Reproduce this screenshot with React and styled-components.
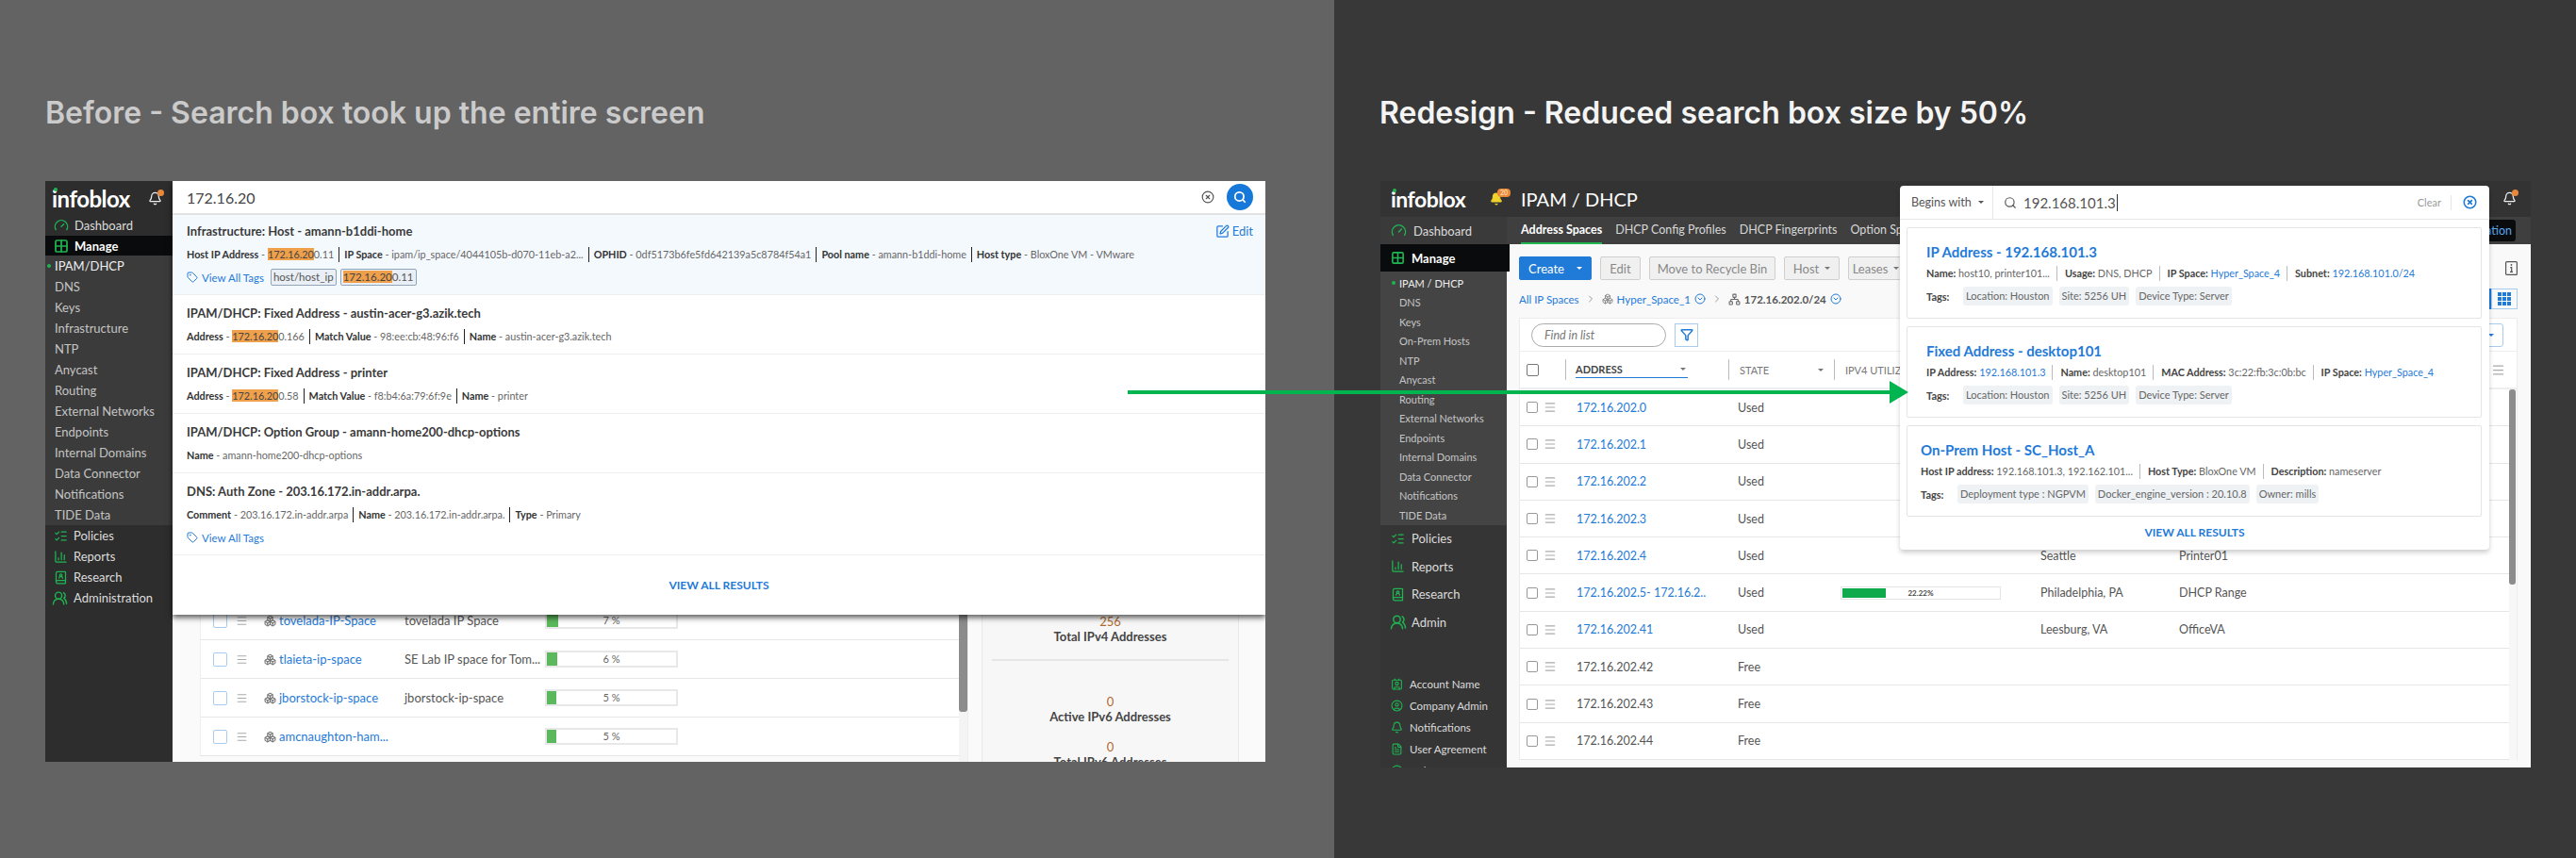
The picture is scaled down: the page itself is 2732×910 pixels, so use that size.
import styled, { createGlobalStyle } from "styled-components";
import {
  Bell,
  BookUser,
  Boxes,
  ChartColumn,
  ChevronRight,
  CircleChevronDown,
  CircleHelp,
  CircleUser,
  CircleX,
  Contact,
  FileText,
  Funnel,
  Gauge,
  Grid2x2,
  ListChecks,
  Menu,
  Network,
  Search,
  SquarePen,
  Tag,
  UsersRound,
} from "lucide-react";

const GREEN = "#1fb552";
const BLUE = "#1f7ad8";

const GlobalStyle = createGlobalStyle`
html, body {
  margin: 0;
  padding: 0;
  background: #383838;
}
* {
  box-sizing: border-box;
}
`;

const Page = styled.div`
  position: relative;
  display: grid;
  grid-template-columns: 1415px 1fr;
  width: 2732px;
  height: 910px;
  overflow: hidden;
  font-family: Lato, "Liberation Sans", sans-serif;
  color: #444;
`;

const Half = styled.section`
  padding: 100px 0 0 48px;
  background: ${(p) => p.$bg};
`;

const Heading = styled.h1`
  margin: 0 0 52px;
  height: 40px;
  font-family: Inter, "Liberation Sans", sans-serif;
  font-size: 32px;
  font-weight: 600;
  line-height: 40px;
  white-space: nowrap;
  color: ${(p) => p.$color};
`;

const AppFrame = styled.div`
  position: relative;
  display: flex;
  width: ${(p) => p.$width}px;
  height: ${(p) => p.$height}px;
  margin-left: ${(p) => p.$offset || 0}px;
  overflow: hidden;
`;

const Sidebar = styled.nav`
  flex: 0 0 ${(p) => p.$width}px;
  display: flex;
  flex-direction: column;
  background: ${(p) => p.$bg};
  color: #eee;
`;

const LogoBar = styled.div`
  flex: 0 0 ${(p) => p.$height}px;
  display: flex;
  align-items: center;
  justify-content: space-between;
  padding: 0 ${(p) => p.$right}px 0 ${(p) => p.$left}px;
  background: ${(p) => p.$bg || "transparent"};
`;

const Logo = styled.span`
  position: relative;
  font-family: Lato, sans-serif;
  font-size: ${(p) => p.$size}px;
  font-weight: 700;
  letter-spacing: -0.5px;
  color: #fff;
  &::before {
    content: "";
    position: absolute;
    left: 2px;
    top: 3px;
    width: 4px;
    height: 4px;
    border-radius: 50%;
    background: ${GREEN};
  }
`;

const BellWrap = styled.span`
  position: relative;
  display: inline-flex;
  color: ${(p) => p.$color};
`;

const BellDot = styled.span`
  position: absolute;
  top: -2px;
  right: -2px;
  width: 7px;
  height: 7px;
  border-radius: 50%;
  background: #e8883a;
`;

const BellBadge = styled.span`
  position: absolute;
  top: -4px;
  left: 8px;
  padding: 0 3px;
  border-radius: 4px;
  background: #e8883a;
  color: #ffd9a8;
  font-size: 7px;
  font-weight: 700;
  line-height: 9px;
`;

const NavItem = styled.div`
  flex: 0 0 ${(p) => p.$height}px;
  display: flex;
  align-items: center;
  gap: ${(p) => p.$gap}px;
  padding-left: ${(p) => p.$pad}px;
  font-size: ${(p) => p.$size}px;
  color: ${(p) => p.$color || "#dcdcdc"};
  background: ${(p) => p.$bg || "transparent"};
  white-space: nowrap;
  svg {
    flex: none;
    color: ${GREEN};
  }
`;

const ManageItem = styled(NavItem)`
  position: relative;
  z-index: 2;
  font-weight: 700;
  color: #fff;
  background: #0a0b0c;
  margin-right: ${(p) => p.$over || 0}px;
`;

const SubMenu = styled.div`
  display: flex;
  flex-direction: column;
  padding-top: ${(p) => p.$top || 0}px;
  background: ${(p) => p.$bg};
`;

const SubItem = styled.div`
  position: relative;
  flex: 0 0 ${(p) => p.$height}px;
  display: flex;
  align-items: center;
  padding-left: ${(p) => p.$pad}px;
  font-size: ${(p) => p.$size}px;
  color: ${(p) => (p.$on ? "#eee" : "#c4c4c4")};
  white-space: nowrap;
  &::before {
    content: "";
    display: ${(p) => (p.$on ? "block" : "none")};
    position: absolute;
    left: ${(p) => p.$pad - 8}px;
    top: 50%;
    width: 4px;
    height: 4px;
    margin-top: -2px;
    border-radius: 50%;
    background: ${GREEN};
  }
`;

const BottomNav = styled.div`
  display: flex;
  flex-direction: column;
  margin-top: 39px;
`;

/* left screen */

const LeftMain = styled.main`
  position: relative;
  flex: 1;
  display: flex;
  align-items: flex-start;
  padding: 446px 0 0 29px;
  background: #fafafa;
`;

const SearchPanel = styled.div`
  position: absolute;
  z-index: 3;
  top: 0;
  left: 0;
  right: 0;
  height: 460px;
  display: flex;
  flex-direction: column;
  background: #fff;
  box-shadow: 0 3px 6px rgba(0, 0, 0, 0.65);
`;

const BigSearch = styled.div`
  flex: 0 0 36px;
  display: flex;
  align-items: center;
  padding: 0 13px 0 15px;
  border-bottom: 2px solid #e2e2e2;
  font-size: 16px;
  color: #444;
`;

const BigSearchText = styled.span`
  flex: 1;
`;

const BigSearchButton = styled.span`
  display: flex;
  align-items: center;
  justify-content: center;
  width: 28px;
  height: 28px;
  margin-left: 13px;
  border-radius: 50%;
  background: #1678d8;
  color: #fff;
`;

const Result = styled.div`
  padding: ${(p) => (p.$active ? 8 : 10)}px 13px 10px 15px;
  border-bottom: 1px solid #efefef;
  background: ${(p) => (p.$active ? "#f4f9fe" : "#fff")};
`;

const ResultHead = styled.div`
  display: flex;
  align-items: center;
  justify-content: space-between;
`;

const ResultTitle = styled.div`
  font-size: 13px;
  font-weight: 700;
  line-height: 18px;
  color: #3a3a3a;
`;

const EditLink = styled.a`
  display: inline-flex;
  align-items: center;
  gap: 3px;
  font-size: 13px;
  color: ${BLUE};
`;

const ResultMeta = styled.div`
  display: flex;
  align-items: center;
  height: 16px;
  margin-top: 8px;
  font-size: 10.8px;
  color: #666;
  white-space: nowrap;
`;

const MetaPart = styled.span`
  display: inline-block;
  line-height: 16px;
  padding-right: 5px;
  margin-right: 5px;
  border-right: 1px solid #222;
  &:last-child {
    border-right: 0;
  }
  b {
    color: #333;
  }
`;

const Hit = styled.mark`
  background: #f0a04b;
  color: #444;
`;

const TagRow = styled.div`
  display: flex;
  align-items: center;
  gap: 4px;
  height: 16px;
  margin-top: 8px;
  font-size: 11.5px;
`;

const TagLink = styled.a`
  display: inline-flex;
  align-items: center;
  gap: 4px;
  margin-right: 3px;
  color: ${BLUE};
`;

const HostChip = styled.span`
  padding: 1px 2px;
  border: 1px solid #8fa5bb;
  border-radius: 2px;
  background: #e9eff5;
  color: #555;
  font-size: 11.5px;
  line-height: 14px;
`;

const PanelFoot = styled.a`
  flex: 1;
  display: flex;
  align-items: center;
  justify-content: center;
  padding-bottom: 1px;
  font-size: 12px;
  font-weight: 700;
  color: ${BLUE};
`;

const SpaceTable = styled.div`
  flex: 0 0 805px;
  background: #fff;
  border-left: 1px solid #eee;
`;

const SpaceRow = styled.div`
  display: grid;
  grid-template-columns: 24px 30px 16px 133px 149px 141px;
  align-items: center;
  height: 41px;
  padding-left: 13px;
  border-bottom: 1px solid #e6e6e6;
  font-size: 13px;
  color: #555;
`;

const CheckBox = styled.span`
  display: block;
  width: ${(p) => p.$size}px;
  height: ${(p) => p.$size}px;
  border: 1px solid ${(p) => p.$color};
  border-radius: 2px;
  background: #fff;
`;

const RowLink = styled.a`
  color: ${BLUE};
  white-space: nowrap;
`;

const PercentBar = styled.div`
  position: relative;
  height: 18px;
  border: 2px solid #e8e8e8;
  font-size: 11px;
  line-height: 14px;
  text-align: center;
  color: #666;
`;

const PercentFill = styled.span`
  position: absolute;
  left: 0;
  top: 0;
  bottom: 0;
  background: #5cb85c;
`;

const ScrollTrack = styled.div`
  flex: 0 0 10px;
  align-self: stretch;
  background: #f4f4f4;
  border-right: 1px solid #eee;
`;

const ScrollThumb = styled.div`
  height: ${(p) => p.$height}px;
  width: ${(p) => p.$width}px;
  border-radius: 3px;
  background: #8c8c8c;
`;

const StatsPanel = styled.aside`
  flex: 0 0 273px;
  align-self: stretch;
  margin-left: 14px;
  padding-top: 14px;
  background: #f7f7f7;
  border-left: 1px solid #e8e8e8;
  border-right: 1px solid #e8e8e8;
  text-align: center;
  font-size: 13px;
  font-weight: 700;
  color: #444;
`;

const StatBlock = styled.div`
  margin-top: ${(p) => p.$top}px;
  padding-bottom: ${(p) => p.$bottom || 0}px;
  margin-left: 10px;
  margin-right: 10px;
  border-bottom: ${(p) => (p.$line ? "2px solid #e6e6e6" : "0")};
`;

const StatValue = styled.div`
  font-weight: 400;
  line-height: 15px;
  color: #b06a30;
`;

const StatLabel = styled.div`
  line-height: 16px;
`;

/* right screen */

const RightMain = styled.main`
  flex: 1;
  display: flex;
  flex-direction: column;
  min-width: 0;
  background: #f9f9f9;
`;

const TitleBar = styled.header`
  flex: 0 0 38px;
  display: flex;
  align-items: center;
  padding-left: 15px;
  background: #333;
  font-size: 20px;
  color: #fff;
`;

const TabBar = styled.div`
  flex: 0 0 29px;
  display: flex;
  gap: 14px;
  padding-left: 15px;
  background: #3f3f3f;
`;

const TabLink = styled.a`
  display: flex;
  align-items: center;
  font-size: 12.5px;
  font-weight: ${(p) => (p.$on ? 700 : 400)};
  color: ${(p) => (p.$on ? "#fff" : "#d8d8d8")};
  border-bottom: 2px solid ${(p) => (p.$on ? GREEN : "transparent")};
  white-space: nowrap;
`;

const RightTab = styled.a`
  align-self: center;
  height: 23px;
  margin: 0 16px 0 auto;
  padding: 0 4px 0 40px;
  border-radius: 3px;
  background: #0a0b0c;
  font-size: 12.5px;
  line-height: 23px;
  color: #58a6f0;
`;

const Content = styled.div`
  flex: 1;
  min-height: 0;
  padding: 13px 14px 0 13px;
`;

const Toolbar = styled.div`
  display: flex;
  align-items: center;
  gap: 9px;
  height: 25px;
`;

const ToolButton = styled.button`
  display: inline-flex;
  align-items: center;
  justify-content: center;
  gap: ${(p) => p.$gap || 0}px;
  height: 25px;
  width: ${(p) => p.$width}px;
  border: 1px solid ${(p) => (p.$primary ? BLUE : "#cfcfcf")};
  border-radius: 2px;
  background: ${(p) => (p.$primary ? BLUE : "#f0f0f0")};
  color: ${(p) => (p.$primary ? "#fff" : "#888")};
  font-family: inherit;
  font-size: 13px;
`;

const Caret = styled.span`
  display: inline-block;
  width: 0;
  height: 0;
  border-left: 3px solid transparent;
  border-right: 3px solid transparent;
  border-top: 3px solid ${(p) => p.$color || "#777"};
`;

const ToolInfo = styled.span`
  display: inline-flex;
  margin-left: auto;
  margin-right: 0;
  color: #555;
`;

const Crumbs = styled.div`
  display: flex;
  align-items: center;
  gap: 4px;
  height: 20px;
  margin-top: 10px;
  font-size: 11.5px;
  color: ${BLUE};
  white-space: nowrap;
`;

const CrumbSep = styled.span`
  display: inline-flex;
  margin: 0 2px;
  color: #999;
`;

const CrumbBold = styled.b`
  color: #555;
`;

const ViewToggle = styled.span`
  display: inline-flex;
  align-items: center;
  justify-content: center;
  width: 28px;
  height: 22px;
  margin-left: auto;
  border: 1px solid #a9cbee;
  box-shadow: -3px 0 0 ${BLUE};
  color: ${BLUE};
`;

const TableCard = styled.div`
  margin-top: 10px;
  display: flex;
  flex-direction: column;
  background: #fff;
  border: 1px solid #ececec;
  border-bottom: 0;
`;

const FindRow = styled.div`
  flex: 0 0 35px;
  display: flex;
  align-items: center;
  padding: 0 14px 0 12px;
  border-bottom: 1px solid #eee;
`;

const FindInput = styled.div`
  width: 143px;
  height: 25px;
  padding-left: 13px;
  border: 1px solid #aaa;
  border-radius: 13px;
  font-size: 12.5px;
  font-style: italic;
  line-height: 23px;
  color: #777;
`;

const FilterButton = styled.span`
  display: inline-flex;
  align-items: center;
  justify-content: center;
  width: 25px;
  height: 25px;
  margin-left: 9px;
  border: 1px solid #a9cbee;
  color: ${BLUE};
`;

const ViewSelect = styled.span`
  display: inline-flex;
  align-items: center;
  justify-content: flex-end;
  width: 40px;
  height: 25px;
  margin-left: auto;
  padding-right: 9px;
  border: 1px solid #a9cbee;
  border-radius: 0 3px 3px 0;
`;

const HeadRow = styled.div`
  flex: 0 0 40px;
  display: flex;
  align-items: center;
  padding: 0 12px 0 7px;
  border-bottom: 2px solid #eee;
  font-size: 11px;
  color: #777;
  white-space: nowrap;
`;

const HeadCheck = styled.span`
  flex: 0 0 41px;
`;

const HeadCell = styled.span`
  flex: 0 0 ${(p) => p.$width}px;
  display: flex;
  align-items: center;
  height: 22px;
  border-left: 1px solid #bbb;
  padding-left: ${(p) => p.$pad}px;
`;

const HeadSort = styled.span`
  display: flex;
  align-items: center;
  justify-content: space-between;
  width: 119px;
  padding: 0 2px 0 0;
  border-bottom: 1px solid ${BLUE};
  line-height: 17px;
  font-weight: 700;
  color: #444;
`;

const HeadPlain = styled.span`
  display: flex;
  align-items: center;
  justify-content: space-between;
  width: 89px;
`;

const HeadMenu = styled.span`
  display: inline-flex;
  margin-left: auto;
  color: #aaa;
`;

const TableBody = styled.div`
  display: flex;
`;

const RowList = styled.div`
  flex: 1;
  min-width: 0;
`;

const IpRow = styled.div`
  display: grid;
  grid-template-columns: 53px 171px 109px 212px 147px 1fr;
  align-items: center;
  height: 39.3px;
  padding-left: 7px;
  border-bottom: 1px solid #e6e6e6;
  font-size: 12.5px;
  color: #555;
  white-space: nowrap;
`;

const RowHandle = styled.span`
  display: flex;
  align-items: center;
  gap: 6px;
`;

const HandleIcon = styled.span`
  display: inline-flex;
  color: #aaa;
`;

const UtilBar = styled.div`
  position: relative;
  width: 170px;
  height: 14px;
  border: 1px solid #e4e4e4;
  font-size: 8px;
  font-weight: 700;
  line-height: 12px;
  text-align: center;
  color: #444;
`;

const UtilFill = styled.span`
  position: absolute;
  left: 1px;
  top: 1px;
  bottom: 1px;
  background: #0eaa4b;
`;

const RightScroll = styled.div`
  flex: 0 0 8px;
  background: #f7f7f7;
`;

const SearchPopover = styled.div`
  position: absolute;
  z-index: 3;
  top: 5px;
  left: 551px;
  width: 625px;
  height: 386px;
  display: flex;
  flex-direction: column;
  border-radius: 4px;
  background: #fff;
  box-shadow: 0 3px 5px rgba(0, 0, 0, 0.2);
`;

const PopoverBar = styled.div`
  flex: 0 0 36px;
  display: flex;
  align-items: center;
  border-bottom: 1px solid #e6e6e6;
`;

const MatchSelect = styled.div`
  flex: 0 0 99px;
  align-self: stretch;
  display: flex;
  align-items: center;
  gap: 7px;
  padding-left: 12px;
  border-right: 1px solid #e6e6e6;
  font-size: 12.5px;
  color: #555;
`;

const PopoverInput = styled.div`
  flex: 1;
  display: flex;
  align-items: center;
  gap: 7px;
  padding-left: 11px;
  font-size: 15px;
  color: #555;
`;

const TextCaret = styled.span`
  display: inline-block;
  width: 1px;
  height: 18px;
  margin-left: 1px;
  vertical-align: -3px;
  background: #333;
`;

const ClearLink = styled.a`
  padding-right: 10px;
  border-right: 1px solid #e6e6e6;
  font-size: 11px;
  line-height: 16px;
  color: #999;
`;

const CloseIcon = styled.span`
  display: inline-flex;
  margin: 0 13px 0 12px;
  color: ${BLUE};
`;

const CardList = styled.div`
  display: flex;
  flex-direction: column;
  gap: 8px;
  padding: 8px 8px 0 7px;
`;

const HitCard = styled.article`
  height: 97px;
  padding: 15px 0 0 ${(p) => p.$pad}px;
  border: 1px solid #e4e4e4;
  border-radius: 2px;
`;

const HitTitle = styled.h3`
  margin: 0;
  font-size: 15px;
  font-weight: 700;
  line-height: 20px;
  color: ${BLUE};
`;

const HitMeta = styled.div`
  display: flex;
  align-items: center;
  height: 16px;
  margin-top: 5px;
  font-size: 10.8px;
  color: #666;
  white-space: nowrap;
`;

const HitPart = styled.span`
  padding-right: 7px;
  margin-right: 8px;
  border-right: 1px solid #bbb;
  line-height: 16px;
  &:last-child {
    border-right: 0;
  }
  b {
    color: #444;
  }
  a {
    color: ${BLUE};
  }
`;

const HitTags = styled.div`
  display: flex;
  align-items: center;
  gap: 7px;
  margin-top: 6px;
  font-size: 11px;
  color: #666;
  white-space: nowrap;
`;

const HitTagLabel = styled.b`
  flex: 0 0 32px;
  color: #444;
`;

const HitChip = styled.span`
  padding: 0 3px;
  border-radius: 3px;
  background: #eef2f5;
  line-height: 20px;
`;

const PopoverFoot = styled.a`
  flex: 1;
  display: flex;
  align-items: center;
  justify-content: center;
  padding-bottom: 3px;
  font-size: 12px;
  font-weight: 700;
  color: ${BLUE};
`;

const TopBell = styled.span`
  position: absolute;
  z-index: 2;
  top: 10px;
  right: 15px;
`;

const FlowArrow = styled.svg`
  position: absolute;
  z-index: 5;
  left: 1196px;
  top: 404px;
`;

const leftNav = ["DNS", "Keys", "Infrastructure", "NTP", "Anycast", "Routing", "External Networks", "Endpoints", "Internal Domains", "Data Connector", "Notifications", "TIDE Data"];
const rightNav = ["DNS", "Keys", "On-Prem Hosts", "NTP", "Anycast", "Routing", "External Networks", "Endpoints", "Internal Domains", "Data Connector", "Notifications", "TIDE Data"];

const spaces = [
  { name: "tovelada-IP-Space", desc: "tovelada IP Space", pct: 7 },
  { name: "tlaieta-ip-space", desc: "SE Lab IP space for Tom...", pct: 6 },
  { name: "jborstock-ip-space", desc: "jborstock-ip-space", pct: 5 },
  { name: "amcnaughton-ham...", desc: "", pct: 5 },
];

const addresses = [
  { ip: "172.16.202.0", state: "Used", link: true },
  { ip: "172.16.202.1", state: "Used", link: true },
  { ip: "172.16.202.2", state: "Used", link: true },
  { ip: "172.16.202.3", state: "Used", link: true },
  { ip: "172.16.202.4", state: "Used", link: true, place: "Seattle", name: "Printer01" },
  { ip: "172.16.202.5- 172.16.2..", state: "Used", link: true, util: 22.22, place: "Philadelphia, PA", name: "DHCP Range" },
  { ip: "172.16.202.41", state: "Used", link: true, place: "Leesburg, VA", name: "OfficeVA" },
  { ip: "172.16.202.42", state: "Free" },
  { ip: "172.16.202.43", state: "Free" },
  { ip: "172.16.202.44", state: "Free" },
];

const Part = ({ label, children }) => (
  <MetaPart>
    <b>{label}</b> - {children}
  </MetaPart>
);

const ViewAllTags = () => (
  <TagLink>
    <Tag size={12} />
    View All Tags
  </TagLink>
);

// square with an i, the table info toggle
const InfoSquare = () => (
  <svg width="13" height="15" viewBox="0 0 13 15" fill="none" stroke="currentColor" strokeWidth="1.2">
    <rect x="0.6" y="0.6" width="11.8" height="13.8" rx="1" />
    <circle cx="6.5" cy="4" r="0.9" fill="currentColor" stroke="none" />
    <path d="M5.2 6.6h1.5v4.6M5 11.4h3" />
  </svg>
);

// nine filled squares, the grid view toggle
const NineSquares = () => (
  <svg width="14" height="14" viewBox="0 0 14 14" fill="currentColor">
    {[0, 5, 10].flatMap((y) =>
      [0, 5, 10].map((x) => <rect key={`${x}-${y}`} x={x} y={y} width="4" height="4" />)
    )}
  </svg>
);

const BeforeScreen = () => (
  <AppFrame $width={1294} $height={616}>
    <Sidebar $width={135} $bg="#2d2d2d">
      <LogoBar $height={36} $left={7} $right={11}>
        <Logo $size={24}>infoblox</Logo>
        <BellWrap $color="#eee">
          <Bell size={15} />
          <BellDot />
        </BellWrap>
      </LogoBar>
      <NavItem $height={22} $gap={6} $pad={9} $size={13}>
        <Gauge size={16} />
        Dashboard
      </NavItem>
      <ManageItem $height={21} $gap={6} $pad={9} $size={13}>
        <Grid2x2 size={16} strokeWidth={2.6} />
        Manage
      </ManageItem>
      <SubMenu $bg="#3b3b3b">
        <SubItem $height={22} $pad={10} $size={13} $on>
          IPAM/DHCP
        </SubItem>
        {leftNav.map((item) => (
          <SubItem key={item} $height={22} $pad={10} $size={13}>
            {item}
          </SubItem>
        ))}
      </SubMenu>
      <NavItem $height={22} $gap={6} $pad={9} $size={13}>
        <ListChecks size={15} />
        Policies
      </NavItem>
      <NavItem $height={22} $gap={6} $pad={9} $size={13}>
        <ChartColumn size={15} />
        Reports
      </NavItem>
      <NavItem $height={22} $gap={6} $pad={9} $size={13}>
        <BookUser size={15} />
        Research
      </NavItem>
      <NavItem $height={22} $gap={6} $pad={7} $size={13}>
        <UsersRound size={17} />
        Administration
      </NavItem>
    </Sidebar>
    <LeftMain>
      <SearchPanel>
        <BigSearch>
          <BigSearchText>172.16.20</BigSearchText>
          <CircleX size={14} color="#555" />
          <BigSearchButton>
            <Search size={14} strokeWidth={3} />
          </BigSearchButton>
        </BigSearch>
        <Result $active>
          <ResultHead>
            <ResultTitle>Infrastructure: Host - amann-b1ddi-home</ResultTitle>
            <EditLink>
              <SquarePen size={15} />
              Edit
            </EditLink>
          </ResultHead>
          <ResultMeta>
            <Part label="Host IP Address">
              <Hit>172.16.20</Hit>0.11
            </Part>
            <Part label="IP Space">ipam/ip_space/4044105b-d070-11eb-a2...</Part>
            <Part label="OPHID">0df5173b6fe5fd642139a5c8784f54a1</Part>
            <Part label="Pool name">amann-b1ddi-home</Part>
            <Part label="Host type">BloxOne VM - VMware</Part>
          </ResultMeta>
          <TagRow>
            <ViewAllTags />
            <HostChip>host/host_ip</HostChip>
            <HostChip>
              <Hit>172.16.20</Hit>0.11
            </HostChip>
          </TagRow>
        </Result>
        <Result>
          <ResultTitle>IPAM/DHCP: Fixed Address - austin-acer-g3.azik.tech</ResultTitle>
          <ResultMeta>
            <Part label="Address">
              <Hit>172.16.20</Hit>0.166
            </Part>
            <Part label="Match Value">98:ee:cb:48:96:f6</Part>
            <Part label="Name">austin-acer-g3.azik.tech</Part>
          </ResultMeta>
        </Result>
        <Result>
          <ResultTitle>IPAM/DHCP: Fixed Address - printer</ResultTitle>
          <ResultMeta>
            <Part label="Address">
              <Hit>172.16.20</Hit>0.58
            </Part>
            <Part label="Match Value">f8:b4:6a:79:6f:9e</Part>
            <Part label="Name">printer</Part>
          </ResultMeta>
        </Result>
        <Result>
          <ResultTitle>IPAM/DHCP: Option Group - amann-home200-dhcp-options</ResultTitle>
          <ResultMeta>
            <Part label="Name">amann-home200-dhcp-options</Part>
          </ResultMeta>
        </Result>
        <Result>
          <ResultTitle>DNS: Auth Zone - 203.16.172.in-addr.arpa.</ResultTitle>
          <ResultMeta>
            <Part label="Comment">203.16.172.in-addr.arpa</Part>
            <Part label="Name">203.16.172.in-addr.arpa.</Part>
            <Part label="Type">Primary</Part>
          </ResultMeta>
          <TagRow>
            <ViewAllTags />
          </TagRow>
        </Result>
        <PanelFoot>VIEW ALL RESULTS</PanelFoot>
      </SearchPanel>
      <SpaceTable>
        {spaces.map((s) => (
          <SpaceRow key={s.name}>
            <CheckBox $size={15} $color="#a9cbee" />
            <HandleIcon>
              <Menu size={13} />
            </HandleIcon>
            <HandleIcon>
              <Boxes size={13} color="#777" />
            </HandleIcon>
            <RowLink>{s.name}</RowLink>
            <span>{s.desc}</span>
            <PercentBar>
              <PercentFill style={{ width: `${s.pct + 2}%` }} />
              {s.pct} %
            </PercentBar>
          </SpaceRow>
        ))}
      </SpaceTable>
      <ScrollTrack>
        <ScrollThumb $height={117} $width={9} />
      </ScrollTrack>
      <StatsPanel>
        <StatBlock $top={0} $bottom={16} $line>
          <StatValue>256</StatValue>
          <StatLabel>Total IPv4 Addresses</StatLabel>
        </StatBlock>
        <StatBlock $top={36}>
          <StatValue>0</StatValue>
          <StatLabel>Active IPv6 Addresses</StatLabel>
        </StatBlock>
        <StatBlock $top={17}>
          <StatValue>0</StatValue>
          <StatLabel>Total IPv6 Addresses</StatLabel>
        </StatBlock>
      </StatsPanel>
    </LeftMain>
  </AppFrame>
);

const AfterScreen = () => (
  <AppFrame $width={1220} $height={622} $offset={1}>
    <Sidebar $width={134} $bg="#353535">
      <LogoBar $height={38} $left={11} $right={4} $bg="#333">
        <Logo $size={23}>infoblox</Logo>
        <BellWrap $color="#f2d32c">
          <Bell size={14} fill="#f2d32c" />
          <BellBadge>20</BellBadge>
        </BellWrap>
      </LogoBar>
      <NavItem $height={29} $gap={7} $pad={11} $size={13} $bg="#3a3a3a">
        <Gauge size={17} />
        Dashboard
      </NavItem>
      <ManageItem $height={29} $gap={7} $pad={11} $size={13} $over={-3}>
        <Grid2x2 size={15} strokeWidth={2.6} />
        Manage
      </ManageItem>
      <SubMenu $bg="#444" $top={2}>
        <SubItem $height={20.5} $pad={20} $size={11} $on>
          IPAM / DHCP
        </SubItem>
        {rightNav.map((item) => (
          <SubItem key={item} $height={20.5} $pad={20} $size={11}>
            {item}
          </SubItem>
        ))}
      </SubMenu>
      <NavItem $height={29.5} $gap={7} $pad={11} $size={13}>
        <ListChecks size={15} />
        Policies
      </NavItem>
      <NavItem $height={29.5} $gap={7} $pad={11} $size={13}>
        <ChartColumn size={15} />
        Reports
      </NavItem>
      <NavItem $height={29.5} $gap={7} $pad={11} $size={13}>
        <BookUser size={15} />
        Research
      </NavItem>
      <NavItem $height={29.5} $gap={5} $pad={10} $size={13}>
        <UsersRound size={18} />
        Admin
      </NavItem>
      <BottomNav>
        <NavItem $height={23} $gap={7} $pad={11} $size={11.5}>
          <Contact size={13} />
          Account Name
        </NavItem>
        <NavItem $height={23} $gap={7} $pad={11} $size={11.5}>
          <CircleUser size={13} />
          Company Admin
        </NavItem>
        <NavItem $height={23} $gap={7} $pad={11} $size={11.5}>
          <Bell size={13} />
          Notifications
        </NavItem>
        <NavItem $height={23} $gap={7} $pad={11} $size={11.5}>
          <FileText size={13} />
          User Agreement
        </NavItem>
        <NavItem $height={23} $gap={7} $pad={11} $size={11.5}>
          <CircleHelp size={13} />
          Help
        </NavItem>
      </BottomNav>
    </Sidebar>
    <RightMain>
      <TitleBar>IPAM / DHCP</TitleBar>
      <TabBar>
        <TabLink $on>Address Spaces</TabLink>
        <TabLink>DHCP Config Profiles</TabLink>
        <TabLink>DHCP Fingerprints</TabLink>
        <TabLink>Option Spaces</TabLink>
        <RightTab>Automation</RightTab>
      </TabBar>
      <Content>
        <Toolbar>
          <ToolButton $primary $width={77} $gap={13}>
            Create
            <Caret $color="#fff" />
          </ToolButton>
          <ToolButton $width={43}>Edit</ToolButton>
          <ToolButton $width={134}>Move to Recycle Bin</ToolButton>
          <ToolButton $width={59} $gap={6}>
            Host
            <Caret />
          </ToolButton>
          <ToolButton $width={59} $gap={6}>
            Leases
            <Caret />
          </ToolButton>
          <ToolInfo>
            <InfoSquare />
          </ToolInfo>
        </Toolbar>
        <Crumbs>
          All IP Spaces
          <CrumbSep>
            <ChevronRight size={12} />
          </CrumbSep>
          <Boxes size={12} color="#888" />
          Hyper_Space_1
          <CircleChevronDown size={12} />
          <CrumbSep>
            <ChevronRight size={12} />
          </CrumbSep>
          <Network size={13} color="#666" />
          <CrumbBold>172.16.202.0/24</CrumbBold>
          <CircleChevronDown size={12} />
          <ViewToggle>
            <NineSquares />
          </ViewToggle>
        </Crumbs>
        <TableCard>
          <FindRow>
            <FindInput>Find in list</FindInput>
            <FilterButton>
              <Funnel size={14} strokeWidth={2.5} />
            </FilterButton>
            <ViewSelect>
              <Caret $color={BLUE} />
            </ViewSelect>
          </FindRow>
          <HeadRow>
            <HeadCheck>
              <CheckBox $size={13} $color="#777" />
            </HeadCheck>
            <HeadCell $width={173} $pad={10}>
              <HeadSort>
                ADDRESS
                <Caret />
              </HeadSort>
            </HeadCell>
            <HeadCell $width={112} $pad={11}>
              <HeadPlain>
                STATE
                <Caret />
              </HeadPlain>
            </HeadCell>
            <HeadCell $width={200} $pad={11}>
              IPV4 UTILIZATION
            </HeadCell>
            <HeadMenu>
              <Menu size={15} />
            </HeadMenu>
          </HeadRow>
          <TableBody>
            <RowList>
              {addresses.map((a) => (
                <IpRow key={a.ip}>
                  <RowHandle>
                    <CheckBox $size={12} $color="#999" />
                    <HandleIcon>
                      <Menu size={14} />
                    </HandleIcon>
                  </RowHandle>
                  {a.link ? <RowLink>{a.ip}</RowLink> : <span>{a.ip}</span>}
                  <span>{a.state}</span>
                  {a.util ? (
                    <UtilBar>
                      <UtilFill style={{ width: "46px" }} />
                      {a.util}%
                    </UtilBar>
                  ) : (
                    <span />
                  )}
                  <span>{a.place}</span>
                  <span>{a.name}</span>
                </IpRow>
              ))}
            </RowList>
            <RightScroll>
              <ScrollThumb $height={207} $width={7} />
            </RightScroll>
          </TableBody>
        </TableCard>
      </Content>
    </RightMain>
    <TopBell>
      <BellWrap $color="#eee">
        <Bell size={15} />
        <BellDot />
      </BellWrap>
    </TopBell>
    <SearchPopover>
      <PopoverBar>
        <MatchSelect>
          Begins with
          <Caret $color="#555" />
        </MatchSelect>
        <PopoverInput>
          <Search size={14} />
          <span>
            192.168.101.3
            <TextCaret />
          </span>
        </PopoverInput>
        <ClearLink>Clear</ClearLink>
        <CloseIcon>
          <CircleX size={15} strokeWidth={2.5} />
        </CloseIcon>
      </PopoverBar>
      <CardList>
        <HitCard $pad={20}>
          <HitTitle>IP Address - 192.168.101.3</HitTitle>
          <HitMeta>
            <HitPart>
              <b>Name:</b> host10, printer101...
            </HitPart>
            <HitPart>
              <b>Usage:</b> DNS, DHCP
            </HitPart>
            <HitPart>
              <b>IP Space:</b> <a>Hyper_Space_4</a>
            </HitPart>
            <HitPart>
              <b>Subnet:</b> <a>192.168.101.0/24</a>
            </HitPart>
          </HitMeta>
          <HitTags>
            <HitTagLabel>Tags:</HitTagLabel>
            <HitChip>Location: Houston</HitChip>
            <HitChip>Site: 5256 UH</HitChip>
            <HitChip>Device Type: Server</HitChip>
          </HitTags>
        </HitCard>
        <HitCard $pad={20}>
          <HitTitle>Fixed Address - desktop101</HitTitle>
          <HitMeta>
            <HitPart>
              <b>IP Address:</b> <a>192.168.101.3</a>
            </HitPart>
            <HitPart>
              <b>Name:</b> desktop101
            </HitPart>
            <HitPart>
              <b>MAC Address:</b> 3c:22:fb:3c:0b:bc
            </HitPart>
            <HitPart>
              <b>IP Space:</b> <a>Hyper_Space_4</a>
            </HitPart>
          </HitMeta>
          <HitTags>
            <HitTagLabel>Tags:</HitTagLabel>
            <HitChip>Location: Houston</HitChip>
            <HitChip>Site: 5256 UH</HitChip>
            <HitChip>Device Type: Server</HitChip>
          </HitTags>
        </HitCard>
        <HitCard $pad={14}>
          <HitTitle>On-Prem Host - SC_Host_A</HitTitle>
          <HitMeta>
            <HitPart>
              <b>Host IP address:</b> 192.168.101.3, 192.162.101...
            </HitPart>
            <HitPart>
              <b>Host Type:</b> BloxOne VM
            </HitPart>
            <HitPart>
              <b>Description:</b> nameserver
            </HitPart>
          </HitMeta>
          <HitTags>
            <HitTagLabel>Tags:</HitTagLabel>
            <HitChip>Deployment type : NGPVM</HitChip>
            <HitChip>Docker_engine_version : 20.10.8</HitChip>
            <HitChip>Owner: mills</HitChip>
          </HitTags>
        </HitCard>
      </CardList>
      <PopoverFoot>VIEW ALL RESULTS</PopoverFoot>
    </SearchPopover>
  </AppFrame>
);

const App = () => (
  <Page>
    <GlobalStyle />
    <Half $bg="#636363">
      <Heading $color="#cbcbcb">Before - Search box took up the entire screen</Heading>
      <BeforeScreen />
    </Half>
    <Half $bg="#383838">
      <Heading $color="#f4f4f4">Redesign - Reduced search box size by 50%</Heading>
      <AfterScreen />
    </Half>
    <FlowArrow width="828" height="24" viewBox="0 0 828 24">
      <rect x="0" y="10" width="810" height="4" fill="#00b44f" />
      <polygon points="808,0 828,12 808,24" fill="#00b44f" />
    </FlowArrow>
  </Page>
);

export default App;
